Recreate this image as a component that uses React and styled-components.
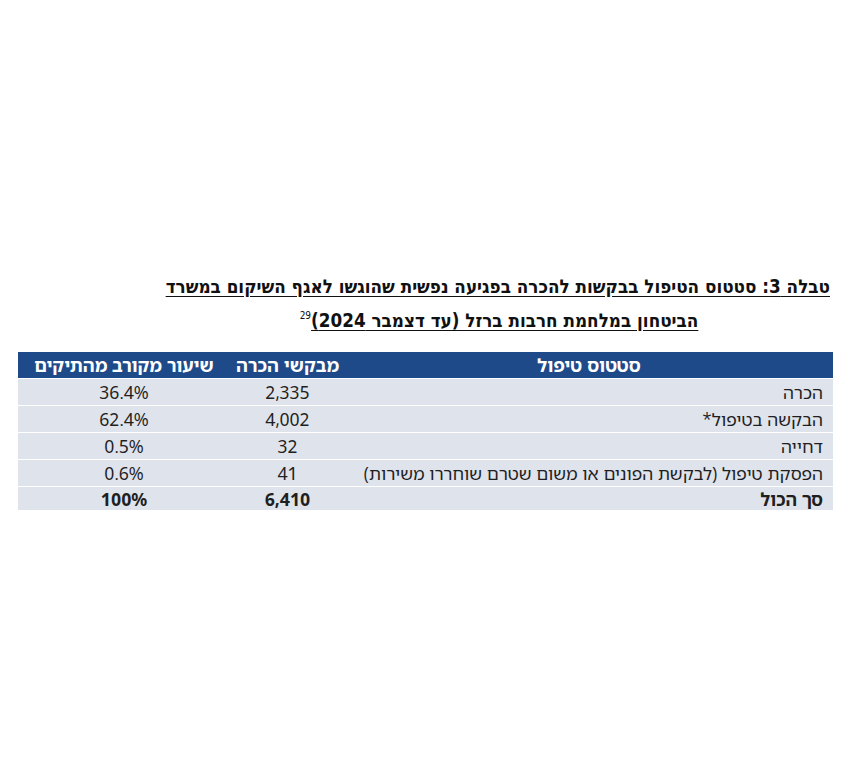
import styled, { createGlobalStyle } from 'styled-components';

const GlobalStyle = createGlobalStyle`
  html, body {
    margin: 0;
    padding: 0;
    background: #ffffff;
  }
  body {
    font-family: "Noto Sans Hebrew", "Noto Sans", "Liberation Sans", "DejaVu Sans", sans-serif;
    color: #1a1a1a;
  }
`;

const Page = styled.div`
  width: 853px;
  height: 765px;
  box-sizing: border-box;
  padding: 270px 20px 0 18px;
  direction: rtl;
`;

const Caption = styled.h2`
  margin: 0 0 14px;
  padding: 0 3px 0 150px;
  font-family: "DejaVu Sans Condensed", "Liberation Sans", sans-serif;
  font-weight: 700;
  font-size: 18.7px;
  line-height: 34px;
  text-align: center;
  white-space: nowrap;
  text-decoration: underline;
  text-underline-offset: 3px;
  color: #111;
`;

const Note = styled.sup`
  font-size: 10px;
  font-weight: 400;
  display: inline-block;
  vertical-align: 8px;
  line-height: 0;
`;

const Table = styled.div`
  width: 815px;
  display: flex;
  flex-direction: column;
  gap: 1px;
`;

const Row = styled.div`
  display: grid;
  grid-template-columns: 488px 115px 1fr;
  height: ${({ $h }) => $h || 26}px;
  align-items: center;
  background: ${({ $head }) => ($head ? '#1f4a8a' : '#dfe3ec')};
  color: ${({ $head }) => ($head ? '#ffffff' : '#1f1f1f')};
  font-weight: ${({ $bold, $head }) => ($bold || $head ? 700 : 400)};
  font-size: ${({ $head }) => ($head ? 18 : 17.5)}px;
`;

const Cell = styled.div`
  text-align: ${({ $start }) => ($start ? 'right' : 'center')};
  padding: ${({ $start }) => ($start ? '0 10px 0 0' : '0')};
  white-space: nowrap;
`;

const rows = [
  ['הכרה', '2,335', '36.4%'],
  ['הבקשה בטיפול*', '4,002', '62.4%'],
  ['דחייה', '32', '0.5%'],
  ['הפסקת טיפול (לבקשת הפונים או משום שטרם שוחררו משירות)', '41', '0.6%'],
];

export default function App() {
  return (
    <Page>
      <GlobalStyle />
      <Caption>
        טבלה 3: סטטוס הטיפול בבקשות להכרה בפגיעה נפשית שהוגשו לאגף השיקום במשרד
        <br />
        הביטחון במלחמת חרבות ברזל (עד דצמבר 2024)<Note>29</Note>
      </Caption>
      <Table>
        <Row $head>
          <Cell>סטטוס טיפול</Cell>
          <Cell>מבקשי הכרה</Cell>
          <Cell>שיעור מקורב מהתיקים</Cell>
        </Row>
        {rows.map(([status, count, share]) => (
          <Row key={status}>
            <Cell $start>{status}</Cell>
            <Cell>{count}</Cell>
            <Cell>{share}</Cell>
          </Row>
        ))}
        <Row $bold $h={23}>
          <Cell $start>סך הכול</Cell>
          <Cell>6,410</Cell>
          <Cell>100%</Cell>
        </Row>
      </Table>
    </Page>
  );
}
